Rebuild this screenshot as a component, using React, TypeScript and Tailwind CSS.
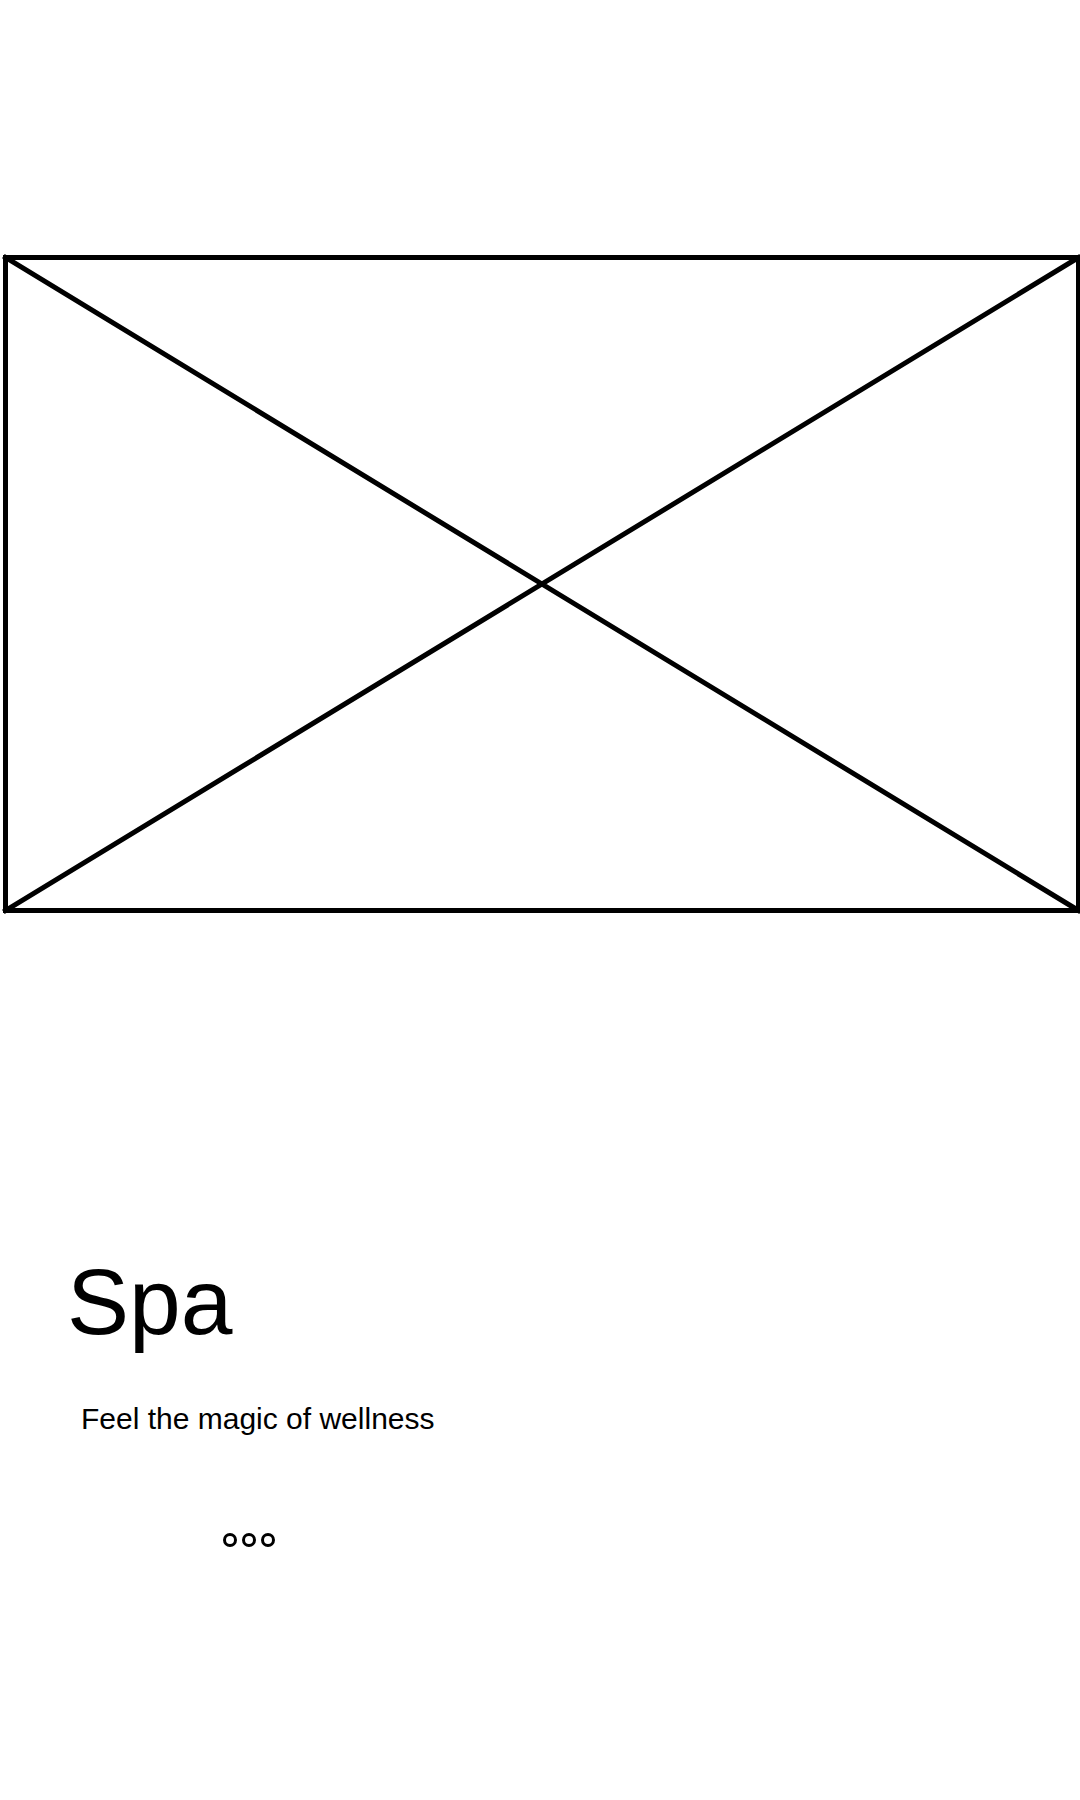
const slides = ["Slide 1", "Slide 2", "Slide 3"];

function ImagePlaceholder() {
  return (
    <svg
      viewBox="0 0 1080 664"
      className="block w-full"
      fill="none"
      stroke="#000"
      strokeWidth="5"
      role="img"
      aria-label="Image placeholder"
    >
      <rect x="5.5" y="5.5" width="1073" height="653" />
      <path d="M5.5 5.5 1078.5 658.5M1078.5 5.5 5.5 658.5" strokeLinecap="square" />
    </svg>
  );
}

export default function App() {
  return (
    <main className="min-h-screen bg-white pt-[252px] font-['Liberation_Sans',Arial,sans-serif] text-black">
      <ImagePlaceholder />
      <section className="mt-[332px] px-[67px]">
        <h1 className="text-[93px] leading-[108px]">Spa</h1>
        <p className="mt-[45px] ml-[14px] text-[30px] leading-[36px]">Feel the magic of wellness</p>
        <nav aria-label="Slides" className="mt-[96px] ml-[156px] flex gap-[5px]">
          {slides.map((label) => (
            <button
              key={label}
              type="button"
              aria-label={label}
              className="size-[14px] rounded-full border-3 border-black"
            />
          ))}
        </nav>
      </section>
    </main>
  );
}
